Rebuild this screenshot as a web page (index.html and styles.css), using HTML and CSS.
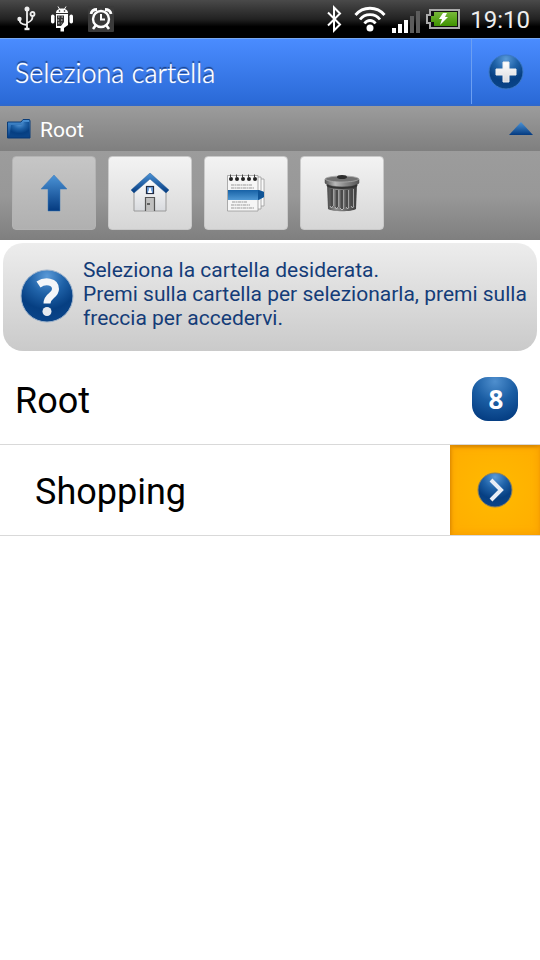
FILE: index.html
```html
<!DOCTYPE html>
<html lang="it">
<head>
  <meta charset="UTF-8">
  <meta name="viewport" content="width=device-width, initial-scale=1.0">
  <title>Seleziona cartella</title>
  <link rel="stylesheet" href="styles.css">
</head>
<body>
  <!-- Sfumature condivise dalle icone -->
  <svg class="defs" width="0" height="0" aria-hidden="true">
    <defs>
      <radialGradient id="ball" cx="50%" cy="12%" r="85%">
        <stop offset="0" stop-color="#5a9ad8"/>
        <stop offset="0.4" stop-color="#1f62a8"/>
        <stop offset="0.75" stop-color="#063f82"/>
        <stop offset="1" stop-color="#0a4488"/>
      </radialGradient>
      <linearGradient id="blue" x1="0" y1="0" x2="0" y2="1">
        <stop offset="0" stop-color="#4b93d6"/>
        <stop offset="1" stop-color="#043a80"/>
      </linearGradient>
      <linearGradient id="band" x1="0" y1="0" x2="0" y2="1">
        <stop offset="0" stop-color="#1762a6"/>
        <stop offset="1" stop-color="#5099d4"/>
      </linearGradient>
      <linearGradient id="white" x1="0" y1="0" x2="0" y2="1">
        <stop offset="0" stop-color="#ffffff"/>
        <stop offset="1" stop-color="#d8dade"/>
      </linearGradient>
      <linearGradient id="green" x1="0" y1="0" x2="0" y2="1">
        <stop offset="0" stop-color="#78b83a"/>
        <stop offset="1" stop-color="#3f9300"/>
      </linearGradient>
      <linearGradient id="metal" x1="0" y1="0" x2="1" y2="0">
        <stop offset="0" stop-color="#4a4a4a"/>
        <stop offset="0.3" stop-color="#8e8e8e"/>
        <stop offset="0.6" stop-color="#6c6c6c"/>
        <stop offset="1" stop-color="#3c3c3c"/>
      </linearGradient>
      <linearGradient id="lid" x1="0" y1="0" x2="1" y2="0">
        <stop offset="0" stop-color="#555555"/>
        <stop offset="0.3" stop-color="#b9b9b9"/>
        <stop offset="0.6" stop-color="#888888"/>
        <stop offset="1" stop-color="#555555"/>
      </linearGradient>
    </defs>
  </svg>

  <div class="status-bar">
    <div class="status-left">
      <svg width="20" height="26" viewBox="0 0 20 26" fill="none" stroke="#eee" stroke-width="1.8">
        <path d="M11 3V23M11 19C5 18 3.500 17 3.500 13M11 17C16 15 16.500 13 16.500 10"/>
        <circle cx="11" cy="3" r="2.5" fill="#eee" stroke="none"/>
        <circle cx="3.500" cy="13" r="2.2" fill="#eee" stroke="none"/>
        <circle cx="16.500" cy="8" r="2"/>
        <path d="M8.500 23H13.500" stroke-width="2.4"/>
      </svg>
      <svg width="24" height="26" viewBox="0 0 24 26" fill="#fff">
        <path d="M6 7C6 4 8.500 2.500 12 2.500S18 4 18 7Z"/>
        <path d="M8 0.500L9.500 3M16 0.500L14.500 3" stroke="#fff"/>
        <circle cx="9.500" cy="5" r="0.800" fill="#222"/>
        <circle cx="14.500" cy="5" r="0.800" fill="#222"/>
        <path d="M6 8H18V19L14 22V25.500H10.500V22H6Z"/>
        <rect x="1" y="8.500" width="3.500" height="9" rx="1.700"/>
        <rect x="19.500" y="8.500" width="3.500" height="9" rx="1.700"/>
        <path d="M7 9.500H14V16L11 20H7Z" fill="#333"/>
        <path d="M8 11H14M7.500 14H14M8 17H12" stroke="#ddd" stroke-dasharray="1.500 2"/>
      </svg>
      <svg width="26" height="26" viewBox="0 0 26 26" fill="none" stroke="#fff">
        <rect width="26" height="26" rx="1" fill="#3a3a3a" stroke="none"/>
        <circle cx="13" cy="13" r="8" stroke-width="2.400"/>
        <path d="M13 8V13.500H17" stroke-width="2"/>
        <path d="M3 8C3.500 5 6 3.500 9 3.500M23 8C22.500 5 20 3.500 17 3.500" stroke-width="2.800"/>
        <path d="M8 19L5 23M18 19L21 23" stroke-width="2.600"/>
      </svg>
    </div>
    <div class="status-right">
      <svg width="16" height="28" viewBox="0 0 16 28" fill="none" stroke="#fff" stroke-width="2">
        <path d="M2 7.500L14 19.500L8 25.500V2.500L14 8.500L2 20.500"/>
      </svg>
      <svg class="wifi" width="32" height="26" viewBox="0 0 32 26" fill="none" stroke="#fff" stroke-width="2.800">
        <path d="M1.500 9C9 0 23 0 30.500 9M6 13.500C11 7 21 7 26 13.500M10.500 17.500C13.500 13.500 18.500 13.500 21.500 17.500"/>
        <circle cx="16" cy="22" r="3.500" fill="#fff" stroke="none"/>
      </svg>
      <svg class="signal" width="28" height="22" viewBox="0 0 28 22">
        <rect y="17" width="4" height="5" fill="#fff"/>
        <rect x="6" y="13" width="4" height="9" fill="#fff"/>
        <rect x="12" y="9" width="4" height="13" fill="#fff"/>
        <rect x="18" y="5" width="4" height="17" fill="#5c5c5c"/>
        <rect x="24" width="4" height="22" fill="#5c5c5c"/>
      </svg>
      <svg width="34" height="20" viewBox="0 0 34 20">
        <path d="M4 1H33V19H4V14H1V6H4Z" fill="#111" stroke="#aaa" stroke-width="2"/>
        <path d="M8 3H31V17H8V13H5V7H8Z" fill="url(#green)"/>
        <path d="M17 4H21L19 8H22L14 16L16 10H13Z" fill="#fff"/>
      </svg>
      <time class="clock">19:10</time>
    </div>
  </div>

  <header class="app-bar">
    <h1>Seleziona cartella</h1>
    <button class="add-button" aria-label="Aggiungi cartella">
      <svg width="36" height="36" viewBox="0 0 36 36">
        <circle cx="18" cy="18" r="17" fill="url(#ball)" stroke="#3c78c4" stroke-width="1"/>
        <path d="M15 8H21V15H28V21H21V28H15V21H8V15H15Z" fill="url(#white)" stroke="#eee" stroke-width="1" stroke-linejoin="round"/>
      </svg>
    </button>
  </header>

  <div class="path-bar">
    <svg width="24" height="20" viewBox="0 0 24 20">
      <path d="M0.500 19V3H14L16 0.500H22.500L23 2V19Z" fill="url(#blue)" stroke="#0b3d78" stroke-width="1"/>
      <path d="M2.500 18L4 6H15L17 3H22V18Z" fill="url(#ball)"/>
    </svg>
    <span class="path-name">Root</span>
    <button class="collapse" aria-label="Chiudi">
      <svg width="24" height="13" viewBox="0 0 24 13"><path d="M12 0L24 13H0Z" fill="url(#blue)"/></svg>
    </button>
  </div>

  <nav class="toolbar">
    <button class="tool" disabled aria-label="Su">
      <svg width="40" height="40" viewBox="0 0 40 40">
        <path d="M20 2L33 16H26V38H14V16H7Z" fill="url(#blue)" stroke="#3a78b8" stroke-width="0.500"/>
      </svg>
    </button>
    <button class="tool" aria-label="Home">
      <svg width="40" height="40" viewBox="0 0 40 40">
        <path d="M4 17L20 4L36 17V38H4Z" fill="url(#white)" stroke="#999" stroke-width="1"/>
        <path d="M1 17L20 0L39 17L36 20L20 6L4 20Z" fill="url(#blue)" stroke="#2f6196" stroke-width="0.500"/>
        <rect x="16.500" y="13.500" width="7" height="7" fill="#6fa2e0" stroke="#222b40" stroke-width="1.200"/>
        <path d="M18 20C18 18 19 18 19 16.500C19 14 21 14 21 16.500C21 18 22 18 22 20Z" fill="#fff"/>
        <path d="M15.500 38V24.500H24.500V38" fill="#c0c0c0" stroke="#555" stroke-width="1.200"/>
        <path d="M17 31H20" stroke="#222" stroke-width="1.200"/>
      </svg>
    </button>
    <button class="tool" aria-label="Note">
      <svg width="40" height="40" viewBox="0 0 40 40">
        <path d="M8 6H38V33H8Z" fill="#fafafa" stroke="#999" stroke-width="0.800"/>
        <path d="M5 4H35V36H5Z" fill="#fafafa" stroke="#999" stroke-width="0.800"/>
        <path d="M1.500 2.500H32V38H1.500Z" fill="#f6f6f6" stroke="#999" stroke-width="0.800"/>
        <path d="M5 12H26M5 15H28M6 29H21M5 32H24M5 35H28" stroke="#999" stroke-width="1" stroke-dasharray="3 0.500 2 0.500"/>
        <path d="M2 17H33L38 19V24L33 27H2Z" fill="url(#band)"/>
        <path d="M32 17L38 19V24L32 27Z" fill="#0f5496"/>
        <g fill="#222">
          <circle cx="5" cy="6" r="2"/>
          <circle cx="11" cy="6" r="2"/>
          <circle cx="17" cy="6" r="2"/>
          <circle cx="23" cy="6" r="2"/>
          <circle cx="29" cy="6" r="2"/>
        </g>
        <path d="M4.500 1.500V5M10.500 1.500V5M16.500 1.500V5M22.500 1.500V5M28.500 1.500V5" stroke="#444" stroke-width="1"/>
      </svg>
    </button>
    <button class="tool" aria-label="Cestino">
      <svg width="40" height="40" viewBox="0 0 40 40">
        <path d="M5 11H35L34 36C30 39 10 39 6 36Z" fill="url(#metal)"/>
        <path d="M10 16V34M15 17V35M20 17V36M25 17V35M30 16V34" stroke="#4a4a4a" stroke-width="3"/>
        <path d="M11.500 16V33M16.500 17V34M21.500 17V35M26.500 17V34M31.500 16V33" stroke="#a0a0a0" stroke-width="1"/>
        <path d="M8 33L9.500 35L11 33M13 34L14.500 36L16 34M18 35L20 37L22 35M24 34L25.500 36L27 34M29 33L30.500 35L32 33" fill="none" stroke="#ccc" stroke-width="0.800"/>
        <path d="M3 6H37V10C34 15 6 15 3 10Z" fill="url(#lid)" stroke="#555" stroke-width="0.500"/>
        <path d="M5 12C9 16 31 16 35 12" fill="none" stroke="#333" stroke-width="2"/>
        <path d="M3 6C5 2 35 2 37 6C34 10 6 10 3 6Z" fill="#707070" stroke="#aaa" stroke-width="0.800"/>
        <ellipse cx="20" cy="4" rx="5" ry="2" fill="#2c2c2c"/>
      </svg>
    </button>
  </nav>

  <main>
    <section class="hint">
      <svg class="hint-icon" width="54" height="54" viewBox="0 0 54 54">
        <circle cx="27" cy="27" r="26" fill="url(#ball)" stroke="#9fb4cc" stroke-width="1"/>
        <path d="M18.500 15.500C25 11 35.500 12 35.500 20C35.500 27 27 26 27 34.500" fill="none" stroke="#f4f6f9" stroke-width="7"/>
        <circle cx="27" cy="42.500" r="4.500" fill="#e6eaf0"/>
      </svg>
      <p>Seleziona la cartella desiderata.<br>Premi sulla cartella per selezionarla, premi sulla freccia per accedervi.</p>
    </section>

    <ul class="folders">
      <li class="folder">
        <span class="folder-name">Root</span>
        <span class="count">8</span>
      </li>
      <li class="folder child">
        <span class="folder-name">Shopping</span>
        <button class="open" aria-label="Apri Shopping">
          <svg width="36" height="36" viewBox="0 0 36 36">
            <circle cx="18" cy="18" r="17" fill="url(#ball)" stroke="#8a8060" stroke-width="1"/>
            <path d="M14 8L24 18L14 28" fill="none" stroke="#e8edf5" stroke-width="4"/>
          </svg>
        </button>
      </li>
    </ul>
  </main>
</body>
</html>
```

FILE: styles.css
```css
* {
  box-sizing: border-box;
}

body {
  font-family: Roboto, "Noto Sans", sans-serif;
  margin: 0;
  background-color: #fff;
  color: #000;
}

button {
  padding: 0;
  border: none;
  background: none;
  cursor: pointer;
}

svg {
  display: block;
  flex: none;
}

.defs {
  position: absolute;
}

.status-bar {
  display: flex;
  justify-content: space-between;
  height: 38px;
  padding: 0 10px 0 16px;
  background: linear-gradient(#4a4a4a, #222 50%, #000 70%, #000);
}

.status-left,
.status-right {
  display: flex;
  align-items: center;
}

.status-left {
  gap: 14px;
}

.status-right {
  gap: 6px;
}

.wifi {
  margin-left: 6px;
}

.signal {
  margin-top: 6px;
}

.clock {
  color: #eee;
  font-size: 24px;
  margin-left: 4px;
  padding-top: 2px;
}

.app-bar {
  display: flex;
  align-items: center;
  height: 68px;
  border-top: 1px solid #78a8f0;
  border-bottom: 2px solid #2f68cc;
  background: linear-gradient(#4a8cff, #2a69d6);
}

h1 {
  flex: 1;
  margin: 0;
  padding-top: 2px;
  padding-left: 15px;
  color: #fff;
  font-family: Lato, sans-serif;
  font-size: 27px;
  font-weight: 300;
  text-shadow: 0 0 1px #fff, 0 -2px 1px #173a7a;
}

.add-button {
  display: flex;
  align-items: center;
  justify-content: center;
  align-self: stretch;
  width: 69px;
  border-left: 1px solid #6c9ff2;
}

.path-bar {
  display: flex;
  align-items: center;
  height: 45px;
  padding: 0 7px;
  background: linear-gradient(#9c9c9c, #7f7f7f);
}

.path-name {
  flex: 1;
  padding-left: 9px;
  padding-top: 3px;
  color: #fff;
  font-size: 21px;
}

.toolbar {
  display: flex;
  gap: 12px;
  height: 89px;
  padding: 5px 12px 10px;
  background: linear-gradient(#9c9c9c, #989898 50%, #7f7f7f);
}

.tool {
  display: flex;
  align-items: center;
  justify-content: center;
  width: 84px;
  border: 1px solid #c9c9c9;
  border-radius: 4px;
  background: linear-gradient(#f3f3f3, #d6d6d6);
}

.tool:disabled {
  border-color: #b4b4b4;
  background: linear-gradient(#c6c6c6, #b0b0b0);
}

.hint {
  display: flex;
  align-items: center;
  margin: 3px;
  padding: 15px 8px 21px 17px;
  border-radius: 20px;
  background: linear-gradient(#ededed, #cacaca);
}

.hint-icon {
  margin-top: 4px;
}

.hint p {
  margin: 0;
  padding-left: 9px;
  color: #143c78;
  font-size: 21px;
  line-height: 24px;
}

.folders {
  margin: 0;
  padding: 0;
  list-style: none;
}

.folder {
  display: flex;
  align-items: center;
  height: 91px;
  padding-left: 15px;
  border-bottom: 1px solid #d9d9d9;
}

.folder.child {
  padding-left: 35px;
}

.folder-name {
  flex: 1;
  padding-top: 4px;
  font-size: 36px;
}

.count {
  width: 46px;
  margin-right: 22px;
  border-radius: 16px;
  background: radial-gradient(circle at 50% 10%, #4f8fce, #1b5ea4 45%, #063f84 85%);
  color: #fff;
  font-family: "Open Sans", sans-serif;
  font-size: 26px;
  font-weight: bold;
  line-height: 44px;
  padding-left: 2px;
  text-align: center;
}

.open {
  display: flex;
  align-items: center;
  justify-content: center;
  align-self: stretch;
  width: 90px;
  background: radial-gradient(#ffba00, #ffac00);
  box-shadow: inset 0 0 8px #f59a00, inset 1px 2px 3px #c07800;
}
```
